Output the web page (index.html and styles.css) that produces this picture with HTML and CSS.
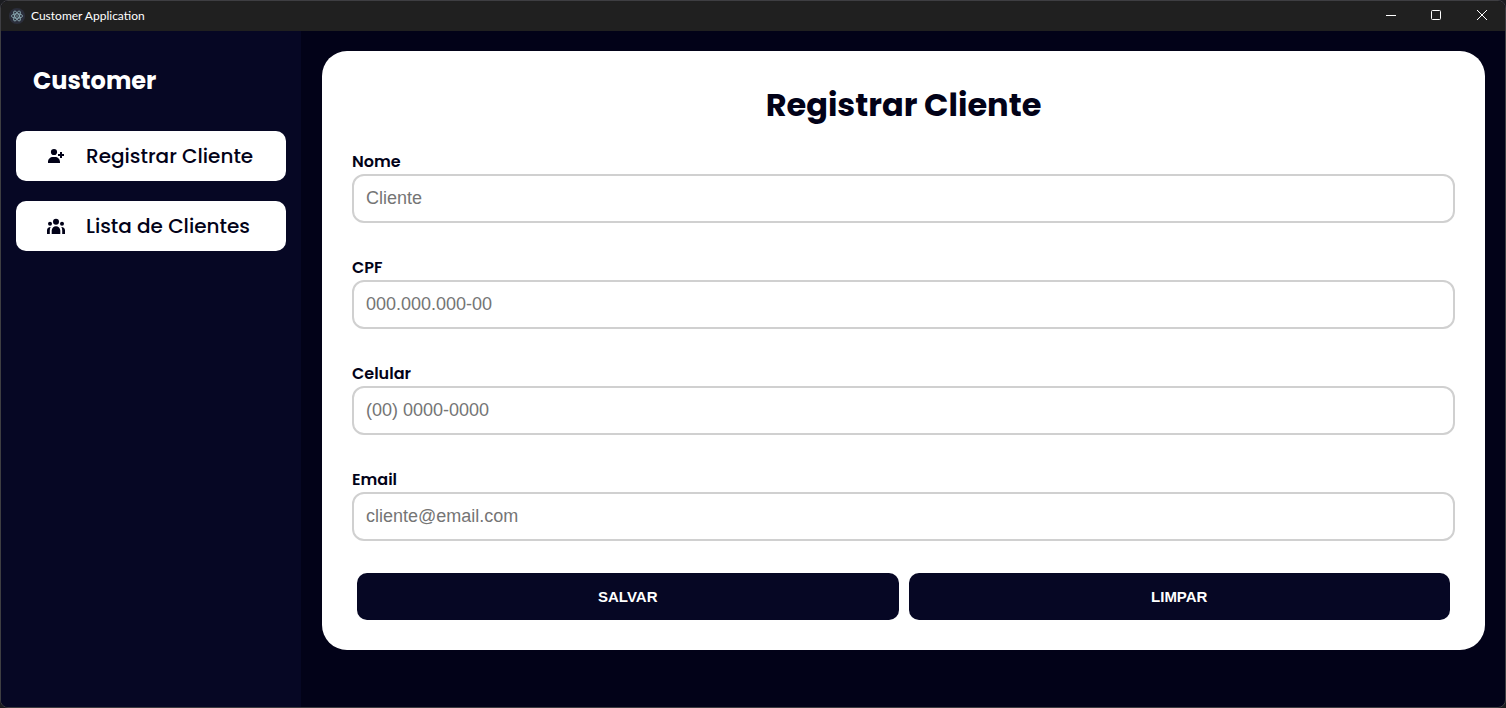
FILE: index.html
```html
<!DOCTYPE html>
<html lang="pt-BR">
<head>
<meta charset="utf-8">
<meta name="viewport" content="width=device-width, initial-scale=1">
<title>Customer Application</title>
<link rel="stylesheet" href="styles.css">
</head>
<body>
<div class="window">
  <header class="titlebar">
    <svg class="app-icon" viewBox="0 0 16 16" aria-hidden="true">
      <circle cx="8" cy="8" r="8" fill="#2b2e3b"/>
      <g fill="none" stroke="#9fc3cc" stroke-width=".7">
        <ellipse cx="8" cy="8" rx="5.600" ry="2.200"/>
        <ellipse cx="8" cy="8" rx="5.600" ry="2.200" transform="rotate(60 8 8)"/>
        <ellipse cx="8" cy="8" rx="5.600" ry="2.200" transform="rotate(120 8 8)"/>
      </g>
      <circle cx="8" cy="8" r=".7" fill="#9fc3cc"/>
    </svg>
    <span class="titlebar-text">Customer Application</span>
    <div class="window-controls">
      <button class="control" type="button" aria-label="Minimizar"><svg viewBox="0 0 12 12"><path d="M2 6.500h10"/></svg></button>
      <button class="control" type="button" aria-label="Maximizar"><svg viewBox="0 0 12 12"><rect x="1.500" y="1.500" width="9" height="9" rx="1"/></svg></button>
      <button class="control" type="button" aria-label="Fechar"><svg viewBox="0 0 12 12"><path d="M1 1l10 10M11 1L1 11"/></svg></button>
    </div>
  </header>
  <div class="layout">
    <aside class="sidebar">
      <h1 class="brand">Customer</h1>
      <nav class="nav">
        <a class="nav-link" href="#registrar">
          <svg class="nav-icon" viewBox="0 0 20 20" aria-hidden="true"><circle cx="8" cy="6" r="3.100"/><path d="M2 17v-1c0-3 2.200-5 5-5h2c2.800 0 5 2 5 5v1zM14 6h2v2h2v2h-2v2h-2v-2h-2V8h2z"/></svg>
          <span>Registrar Cliente</span>
        </a>
        <a class="nav-link" href="#lista">
          <svg class="nav-icon" viewBox="0 0 20 20" aria-hidden="true"><circle cx="10" cy="5.800" r="3"/><circle cx="4" cy="7.800" r="2"/><circle cx="16" cy="7.800" r="2"/><path d="M5.700 18v-3.500a4.300 4.300 0 0 1 8.600 0V18zM1 18v-3.500c0-1.900 1.300-3.300 3.700-3.400-.6 1-.9 2.100-.9 3.400V18zM19 18v-3.500c0-1.900-1.300-3.300-3.700-3.400.6 1 .9 2.100.9 3.400V18z"/></svg>
          <span>Lista de Clientes</span>
        </a>
      </nav>
    </aside>
    <main class="main">
      <form class="card">
        <h2 class="card-title">Registrar Cliente</h2>
        <div class="fields">
          <div class="field"><label for="nome">Nome</label><input id="nome" type="text" placeholder="Cliente"></div>
          <div class="field"><label for="cpf">CPF</label><input id="cpf" type="text" placeholder="000.000.000-00"></div>
          <div class="field"><label for="celular">Celular</label><input id="celular" type="tel" placeholder="(00) 0000-0000"></div>
          <div class="field"><label for="email">Email</label><input id="email" type="email" placeholder="cliente@email.com"></div>
        </div>
        <div class="actions">
          <button class="action" type="submit">SALVAR</button>
          <button class="action" type="reset">LIMPAR</button>
        </div>
      </form>
    </main>
  </div>
</div>
</body>
</html>
```
FILE: styles.css
```css
* { box-sizing: border-box; }

body {
  margin: 0;
  background: #1b1c20;
  color: #020218;
  font-family: Poppins, Inter, sans-serif;
}

.window {
  display: flex;
  flex-direction: column;
  min-height: 100vh;
  border: 1px solid #3e3e42;
  border-radius: 8px;
  overflow: hidden;
  background: #020218;
}

.titlebar {
  display: flex;
  align-items: center;
  height: 30px;
  padding-left: 8px;
  background: #202020;
  color: #fff;
}

.app-icon { width: 16px; height: 16px; }

.titlebar-text {
  margin-left: 6px;
  font: 12px/16px "Segoe UI", Lato, sans-serif;
}

.window-controls { display: flex; margin-left: auto; }

.control {
  display: grid;
  place-items: center;
  width: 46px;
  height: 30px;
  padding: 0 0 2px;
  border: 0;
  background: transparent;
}

.control svg {
  width: 12px;
  height: 12px;
  fill: none;
  stroke: #fff;
}

.layout { display: flex; flex: 1; }

.sidebar {
  flex: none;
  width: 300px;
  padding: 32px 15px;
  background: #060724;
}

.brand {
  margin: 0 0 32px;
  padding-left: 17px;
  color: #fff;
  font-size: 24px;
  line-height: 36px;
  font-weight: 700;
}

.nav { display: flex; flex-direction: column; gap: 20px; }

.nav-link {
  display: flex;
  align-items: center;
  gap: 20px;
  height: 50px;
  padding-left: 30px;
  border-radius: 10px;
  background: #fff;
  color: #020218;
  font-size: 20px;
  font-weight: 500;
  text-decoration: none;
}

.nav-icon { width: 20px; height: 20px; fill: currentColor; }

.main { flex: 1; padding: 20px 20px 20px 21px; }

.card {
  padding: 30px;
  border-radius: 25px;
  background: #fff;
}

.card-title {
  margin: 0 0 21px;
  font-size: 32px;
  line-height: 48px;
  font-weight: 700;
  text-align: center;
}

.fields { display: flex; flex-direction: column; gap: 33px; }

.field { display: flex; flex-direction: column; }

.field label { font-size: 16px; line-height: 24px; font-weight: 600; }

.field input {
  width: 100%;
  height: 49px;
  padding: 0 12px;
  border: 2px solid #d0d0d0;
  border-radius: 12px;
  background: #fff;
  color: #020218;
  font: 18px Arial, "Liberation Sans", sans-serif;
}

.field input::placeholder { color: #757575; }

.actions { display: flex; gap: 10px; margin-top: 32px; padding: 0 5px; }

.action {
  flex: 1;
  height: 47px;
  border: 0;
  border-radius: 10px;
  background: #060724;
  color: #fff;
  font: bold 15px Arial, "Liberation Sans", sans-serif;
}
```
